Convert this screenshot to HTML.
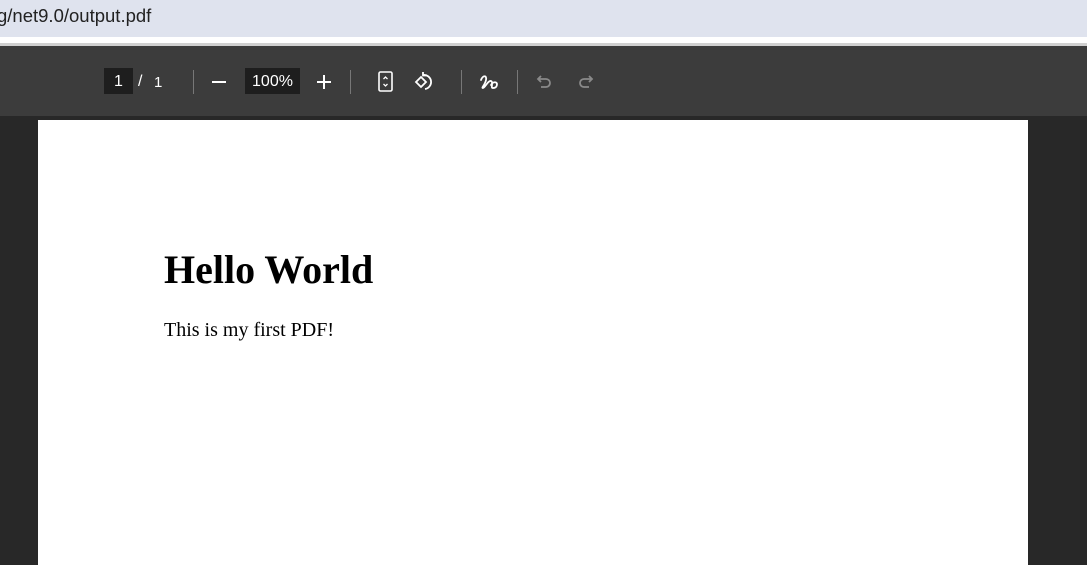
<!DOCTYPE html>
<html><head><style>
body{margin:0;width:1087px;height:565px;overflow:hidden;background:#282828;position:relative;font-family:"Liberation Sans",sans-serif}
.addr{position:absolute;left:0;top:0;width:1087px;height:37px;background:#dfe3ee;}
.addr span{position:absolute;left:-3px;top:5px;font-size:18.5px;color:#222;}
.strip{position:absolute;left:0;top:37px;width:1087px;height:7px;background:#fff}
.gl{position:absolute;left:0;top:43px;width:1087px;height:3px;background:#d0d0d0}
.tb{position:absolute;left:0;top:46px;width:1087px;height:70px;background:#3c3c3c}
.box{position:absolute;background:#1e1e1e;color:#fff;font-size:16px;text-align:center;line-height:28px;height:26px}
.t{position:absolute;color:#fff;font-size:16px}
.sep{position:absolute;top:70px;width:1px;height:24px;background:#777}
.page{position:absolute;left:38px;top:120px;width:990px;height:445px;background:#fff}
h1{position:absolute;left:126px;top:126px;margin:0;font:bold 40px "Liberation Serif",serif;color:#000}
p{position:absolute;left:126px;top:199px;margin:0;font:20px "Liberation Serif",serif;color:#000}
svg{position:absolute}
</style></head><body>
<div class="addr"><span>g/net9.0/output.pdf</span></div>
<div class="strip"></div><div class="gl"></div>
<div class="tb"></div>
<div class="box" style="left:104px;top:68px;width:29px">1</div>
<div class="t" style="left:138px;top:73px">/</div>
<div class="t" style="left:154px;top:74px;font-size:15px">1</div>
<div class="sep" style="left:193px"></div>
<div style="position:absolute;left:212px;top:81px;width:14px;height:2px;background:#fff"></div>
<div class="box" style="left:245px;top:68px;width:55px">100%</div>
<div style="position:absolute;left:317px;top:81px;width:14px;height:2px;background:#fff"></div>
<div style="position:absolute;left:323px;top:75px;width:2px;height:14px;background:#fff"></div>
<div class="sep" style="left:350px"></div>
<svg style="left:376px;top:70px" width="20" height="24" viewBox="0 0 20 24" fill="none" stroke="#fff" stroke-width="1.6"><rect x="3" y="2" width="13" height="19" rx="1.5"/><path d="M7.5 9l2-2 2 2M7.5 14l2 2 2-2" stroke-width="1.3"/></svg>
<svg style="left:413px;top:70px" width="26" height="24" viewBox="0 0 26 24" fill="none" stroke="#fff" stroke-width="1.8"><path d="M3 12l5-5 5 5-5 5z"/><path d="M10 5a7 7 0 1 1 2 14"/><path d="M10 2l0 3.5 3.5 0"/></svg>
<div class="sep" style="left:461px"></div>
<svg style="left:478px;top:70px" width="22" height="24" viewBox="0 0 22 24" fill="none" stroke="#fff" stroke-width="1.8" stroke-linecap="round"><path d="M3 10c2-5 6-5 5 0s-5 8-3 8 5-8 8-7-1 7 2 7 4-2 4-4-4-3-6 1"/></svg>
<div class="sep" style="left:517px"></div>
<svg style="left:535px;top:72px" width="20" height="20" viewBox="0 0 20 20" fill="none" stroke="#8a8a8a" stroke-width="1.8"><path d="M6 4L3 7l3 3"/><path d="M3 7h8a4 4 0 0 1 0 8H6"/></svg>
<svg style="left:575px;top:72px" width="20" height="20" viewBox="0 0 20 20" fill="none" stroke="#8a8a8a" stroke-width="1.8"><path d="M14 4l3 3-3 3"/><path d="M17 7H9a4 4 0 0 0 0 8h5"/></svg>
<div class="page"><h1>Hello World</h1><p>This is my first PDF!</p></div>
</body></html>
